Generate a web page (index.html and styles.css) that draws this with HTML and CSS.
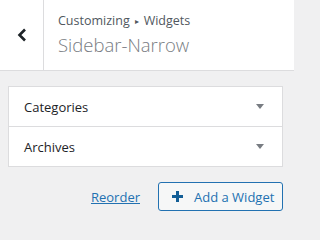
FILE: index.html
```html
<!DOCTYPE html>
<html>
<head>
<meta charset="utf-8">
<link rel="stylesheet" href="styles.css">
</head>
<body>
<div class="page">
<div class="header">
  <div class="back">
    <svg width="12" height="14" viewBox="0 0 12 14"><path d="M9 1.5 L3.5 7 L9 12.5" fill="none" stroke="#1d2327" stroke-width="2.6"/></svg>
  </div>
  <div class="titles">
    <div class="crumb">Customizing<span class="sep">▸</span>Widgets</div>
    <div class="title">Sidebar-Narrow</div>
  </div>
</div>
<div class="content">
  <div class="widgets">
    <div class="row"><span class="name">Categories</span><span class="arrow"></span></div>
    <div class="row"><span class="name">Archives</span><span class="arrow"></span></div>
  </div>
  <div class="actions">
    <a class="reorder" href="#">Reorder</a>
    <button class="add"><svg width="11" height="11" viewBox="0 0 11 11"><path d="M5.5 0 V11 M0 5.5 H11" stroke="#135e96" stroke-width="3"/></svg><span>Add a Widget</span></button>
  </div>
</div>
</div>
</body>
</html>
```
FILE: styles.css
```css
html, body { margin: 0; padding: 0; }
body {
  background: #f0f0f1;
  font-family: "Open Sans", "Noto Sans", sans-serif;
  overflow: hidden;
}
.page {
  width: 294px;
  height: 226px;
  overflow: hidden;
}
.header {
  display: flex;
  height: 70px;
  background: #fff;
  border-bottom: 1px solid #dcdcde;
}
.back {
  width: 44px;
  box-sizing: border-box;
  border-right: 1px solid #dcdcde;
  display: flex;
  align-items: center;
  justify-content: center;
  padding-left: 1px;
}
.titles {
  padding-left: 14px;
  padding-top: 11px;
}
.crumb {
  font-size: 12.5px;
  color: #50575e;
  line-height: 20px;
  display: flex;
  align-items: center;
}
.sep { font-size: 8px; margin: 0 5px; color: #50575e; }
.title {
  font-size: 18.5px;
  font-weight: 300;
  color: #787c82;
  line-height: 26px;
  margin-top: 1px;
}
.content {
  padding: 15px 11px 0 8px;
}
.widgets {
  background: #fff;
  border: 1px solid #dcdcde;
}
.row {
  height: 39px;
  display: flex;
  align-items: center;
  justify-content: space-between;
  padding: 0 18px 0 15px;
}
.row + .row { border-top: 1px solid #dcdcde; }
.name {
  font-size: 13px;
  color: #1d2327;
}
.arrow {
  width: 0; height: 0;
  border-left: 4px solid transparent;
  border-right: 4px solid transparent;
  border-top: 5px solid #787c82;
}
.actions {
  display: flex;
  justify-content: flex-end;
  align-items: center;
  gap: 18px;
  margin-top: 15px;
}
.reorder {
  font-size: 13px;
  color: #2271b1;
  text-decoration: underline;
}
.add {
  display: flex;
  align-items: center;
  gap: 11px;
  height: 29px;
  width: 125px;
  padding: 0 0 0 13px;
  border: 1px solid #2271b1;
  border-radius: 3px;
  background: #f6f7f7;
  color: #2271b1;
  font-family: inherit;
  font-size: 13px;
}
```
